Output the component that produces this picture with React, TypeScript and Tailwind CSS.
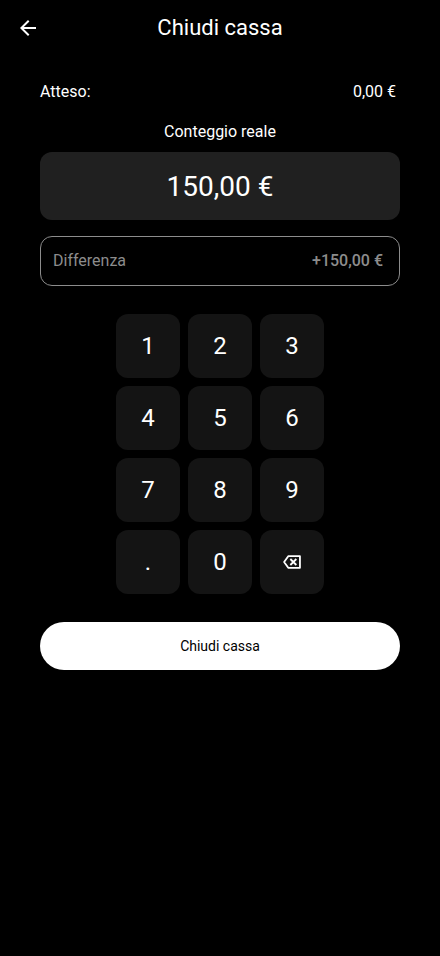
import { useState } from "react";
import { MdArrowBack } from "react-icons/md";

const KEYS = ["1", "2", "3", "4", "5", "6", "7", "8", "9", ".", "0"];
const EXPECTED = 0;

function euro(value: number) {
  return `${value.toFixed(2).replace(".", ",")} €`;
}

function BackspaceIcon() {
  return (
    <svg
      viewBox="0 0 24 24"
      className="size-[18px]"
      fill="none"
      stroke="currentColor"
      strokeWidth="2.4"
      strokeLinejoin="round"
      aria-hidden="true"
    >
      <path d="M22.6 4.2v15.6H7L1.5 12 7 4.2z" />
      <path d="M9.8 8l8 8M17.8 8l-8 8" />
    </svg>
  );
}

const keyClass =
  "flex size-16 items-center justify-center rounded-xl bg-[#141414] text-2xl text-white";

export default function App() {
  const [entry, setEntry] = useState("150");
  const counted = Number(entry) || 0;
  const difference = counted - EXPECTED;

  function press(key: string) {
    if (key === "." && entry.includes(".")) return;
    setEntry(entry + key);
  }

  return (
    <div className="min-h-screen bg-black font-['Roboto',sans-serif] text-white">
      <header className="grid h-14 grid-cols-[56px_1fr_56px] items-center">
        <button type="button" aria-label="Indietro" className="flex h-14 items-center justify-center">
          <MdArrowBack className="size-6" />
        </button>
        <h1 className="text-center text-[22px] leading-7">Chiudi cassa</h1>
      </header>

      <main className="flex flex-col px-10 pt-6 text-base leading-6">
        <div className="flex justify-between pr-1">
          <span>Atteso:</span>
          <span>{euro(EXPECTED)}</span>
        </div>

        <section className="mt-4 text-center">
          <h2>Conteggio reale</h2>
          <output className="mt-2 flex h-17 items-center justify-center rounded-xl bg-[#202020] text-[28px] leading-[33px]">
            {euro(counted)}
          </output>
        </section>

        <div className="mt-4 flex items-center justify-between rounded-xl border border-[#8c8c8c] py-3 pr-4 pl-3 text-[#8c8c8c]">
          <span>Differenza</span>
          <span className="font-medium">
            {difference >= 0 ? "+" : ""}
            {euro(difference)}
          </span>
        </div>

        <div className="mt-7 grid grid-cols-[repeat(3,64px)] justify-center gap-2">
          {KEYS.map((key) => (
            <button key={key} type="button" className={keyClass} onClick={() => press(key)}>
              {key}
            </button>
          ))}
          <button
            type="button"
            aria-label="Cancella"
            className={keyClass}
            onClick={() => setEntry(entry.slice(0, -1))}
          >
            <BackspaceIcon />
          </button>
        </div>

        <button type="button" className="mt-7 h-12 rounded-full bg-white text-sm text-black">
          Chiudi cassa
        </button>
      </main>
    </div>
  );
}
